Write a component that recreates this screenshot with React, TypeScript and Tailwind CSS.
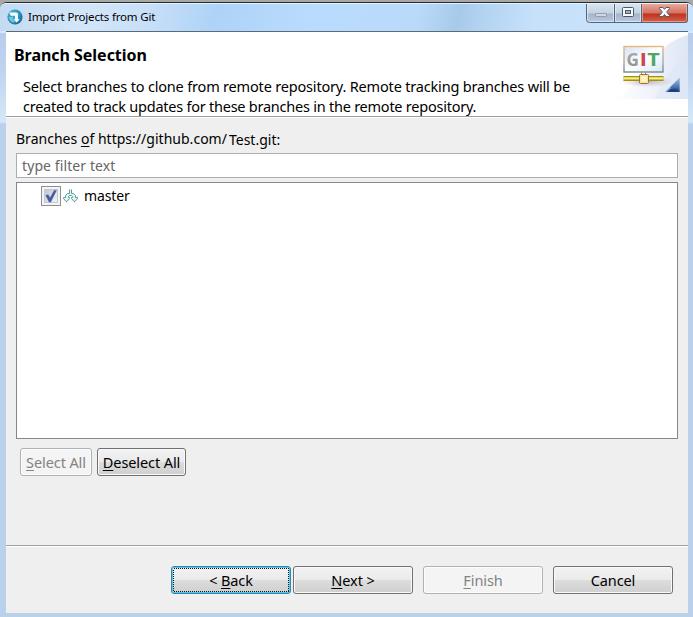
import type { ReactNode } from "react";

function Button({ children, className = "" }: { children: ReactNode; className?: string }) {
  return (
    <button
      className={`flex h-7 items-center justify-center whitespace-nowrap rounded-[3px] border pb-px text-[14.5px] leading-5 tracking-[-0.1px] ${className}`}
    >
      {children}
    </button>
  );
}

const normal =
  "border-[#707070] bg-[linear-gradient(#f2f2f2_0%,#ebebeb_48%,#dddddd_50%,#cfcfcf_100%)] shadow-[inset_0_0_0_1px_#fafafa] text-black";
const disabled = "border-[#adb2b5] bg-[#f4f4f4] shadow-[inset_0_0_0_1px_#fcfcfc] text-[#838383]";

function U({ children }: { children: ReactNode }) {
  return <span className="underline decoration-1 underline-offset-2">{children}</span>;
}

function AppIcon() {
  return (
    <svg width="16" height="16" viewBox="0 0 16 16" className="shrink-0">
      <defs>
        <radialGradient id="orb" cx="35%" cy="30%" r="75%">
          <stop offset="0" stopColor="#55b5d2" />
          <stop offset=".6" stopColor="#2a93bb" />
          <stop offset="1" stopColor="#126a99" />
        </radialGradient>
      </defs>
      <circle cx="8" cy="8" r="7.6" fill="url(#orb)" />
      <path d="M2.5 3.4H9Q11 3.4 11 5.6V10.2H12.8L9.6 13.4L6.2 10.2H8V6.8H5Q3 6.8 2.5 3.4Z" fill="#f4fcff" />
      <path d="M1.6 8H6V10.5L8 13.4H5Q2 11.5 1.6 8Z" fill="#6fc6dc" />
    </svg>
  );
}

function WindowControls() {
  return (
    <svg width="104" height="20" viewBox="0 0 104 20" className="shrink-0">
      <defs>
        <linearGradient id="ctl" x1="0" y1="0" x2="0" y2="1">
          <stop offset="0" stopColor="#d9e4f0" />
          <stop offset=".45" stopColor="#c3d2e2" />
          <stop offset=".5" stopColor="#a2b5ca" />
          <stop offset="1" stopColor="#bdd0e3" />
        </linearGradient>
        <linearGradient id="close" x1="0" y1="0" x2="0" y2="1">
          <stop offset="0" stopColor="#e8a99c" />
          <stop offset=".45" stopColor="#d5705f" />
          <stop offset=".5" stopColor="#bd3321" />
          <stop offset="1" stopColor="#d96b50" />
        </linearGradient>
        <clipPath id="ctlClip">
          <path d="M1 0H102V16Q102 19 99 19H4Q1 19 1 16Z" />
        </clipPath>
      </defs>
      <g clipPath="url(#ctlClip)">
        <rect width="56" height="20" fill="url(#ctl)" />
        <rect x="56" width="48" height="20" fill="url(#close)" />
      </g>
      <path d="M1.5 0V15.5Q1.5 17.5 3.5 17.5H27.5V0M29.5 0V17.5H54.5V0" fill="none" stroke="#e3edf7" strokeOpacity=".75" />
      <path d="M56.5 0V17.5H98.5Q100.5 17.5 100.5 15.5V0" fill="none" stroke="#f0b4a3" strokeOpacity=".7" />
      <path d="M.5 0V15.5Q.5 18.5 3.5 18.5H98.5Q101.5 18.5 101.5 15.5V0M28.5 0V18M55.5 0V18" fill="none" stroke="#536579" />
      <rect x="9.5" y="9.5" width="11" height="3" rx=".5" fill="#d0d7df" stroke="#929fad" />
      <rect x="36.5" y="3.5" width="11" height="9" rx="1" fill="#f7f7f8" stroke="#4d5568" />
      <rect x="39.5" y="6.5" width="5" height="3" fill="#9fb2ca" stroke="#4d5568" />
      <path d="M73.5 3.5H77L78.5 5.3L80 3.5H83.5V4.5L80.7 8L83.5 11.5V12.5H80L78.5 10.5L77 12.5H73.5V11.5L76.3 8L73.5 4.5Z" fill="#f7f7f8" stroke="#555b6b" />
    </svg>
  );
}

function GitBanner() {
  return (
    <svg width="75" height="67" viewBox="0 0 75 67" className="shrink-0">
      <defs>
        <linearGradient id="swoosh" x1="0" y1="0" x2="1" y2="0">
          <stop offset="0" stopColor="#ffffff" />
          <stop offset=".5" stopColor="#f0f3fb" />
          <stop offset="1" stopColor="#dee6f5" />
        </linearGradient>
        <linearGradient id="screen" x1="0" y1="0" x2="1" y2="1">
          <stop offset="0" stopColor="#d3e2f5" />
          <stop offset=".5" stopColor="#ffffff" />
          <stop offset="1" stopColor="#d7e6f8" />
        </linearGradient>
        <linearGradient id="frame" x1="0" y1="0" x2="0" y2="1">
          <stop offset="0" stopColor="#e5b878" />
          <stop offset=".6" stopColor="#a9abb0" />
          <stop offset="1" stopColor="#74888d" />
        </linearGradient>
        <linearGradient id="letter" x1="0" y1="0" x2="0" y2="1">
          <stop offset="0" stopColor="#b2b2b2" />
          <stop offset="1" stopColor="#8a8a8a" />
        </linearGradient>
        <linearGradient id="corner" x1="0" y1="0" x2="0" y2="1">
          <stop offset="0" stopColor="#a9c4e0" />
          <stop offset=".5" stopColor="#5f8abb" />
          <stop offset="1" stopColor="#1b4180" />
        </linearGradient>
        <radialGradient id="shade">
          <stop offset="0" stopColor="#806b90" stopOpacity=".5" />
          <stop offset="1" stopColor="#b9a9c4" stopOpacity="0" />
        </radialGradient>
      </defs>
      <path d="M75 3Q55 8 42 25Q26 52 2 67H75Z" fill="url(#swoosh)" />
      <path d="M75 25Q55 34 42 67H75Z" fill="#dce6f6" opacity=".45" />
      <ellipse cx="34" cy="49.5" rx="28" ry="6" fill="url(#shade)" />
      <rect x="11" y="14.5" width="39" height="25.5" fill="url(#screen)" stroke="url(#frame)" strokeWidth="1.4" />
      <g fontFamily="Open Sans, Noto Sans, sans-serif" fontSize="17.5" fontWeight="700">
        <text x="13.4" y="34.2" fill="url(#letter)" textLength="12.5" lengthAdjust="spacingAndGlyphs">G</text>
        <text x="27.3" y="34.2" fill="#ce4650" fontWeight="800">I</text>
        <text x="34.2" y="34.2" fill="#4fa85e" textLength="12.5" lengthAdjust="spacingAndGlyphs">T</text>
      </g>
      <path d="M10.5 44H50.5V49H10.5Z" fill="#a69200" />
      <path d="M10.5 45.3H50.5V47.5H10.5Z" fill="#f4ed91" />
      <path d="M28.5 40.5V43M32.5 40.5V43" stroke="#a28b4a" />
      <rect x="26.5" y="42.5" width="9" height="9" rx="1" fill="#f8e69e" stroke="#94743b" />
      <rect x="28.5" y="44.5" width="5" height="5" fill="#fff5c8" />
      <path d="M66.7 45.5V60H52.2Z" fill="url(#corner)" />
      <path d="M52.2 60L57.5 54.7V56.5L62 57.2L66.7 60Z" fill="#c4d8ec" opacity=".6" />
      <path d="M57.5 56.7H63L66.7 60H54Z" fill="#1b4180" />
    </svg>
  );
}

function CheckBox() {
  return (
    <svg width="20" height="20" viewBox="0 0 20 20" className="shrink-0">
      <rect x=".5" y=".5" width="19" height="19" fill="#f4f4f4" stroke="#8e8f8f" />
      <defs>
        <linearGradient id="box" x1="0" y1="0" x2="1" y2="1">
          <stop offset="0" stopColor="#bfc5cf" />
          <stop offset="1" stopColor="#f4f5f7" />
        </linearGradient>
      </defs>
      <rect x="3.5" y="3.5" width="13" height="13" fill="url(#box)" stroke="#c3c9d2" />
      <path d="M4.8 9.3L7.2 8.7L9 12L13.2 4.4H15.4L9.7 16H8.1Z" fill="#4659a1" stroke="#3d509a" strokeWidth=".4" />
    </svg>
  );
}

function BranchIcon() {
  return (
    <svg width="16" height="16" viewBox="0 0 16 16" className="shrink-0">
      <path
        d="M6.5 1.5V5.5H4.5L2.5 7.5V9.5H.5V10.5L3 13.5H4L6.5 10.5V9.5H5.5V8.5L6.5 7.5H8.5L9.5 8.5V9.5H8.5V10.5L11 13.5H12L14.5 10.5V9.5H12.5V7.5L10.5 5.5H8.5V1.5"
        fill="#dff3f0"
        stroke="#5a9c9e"
        strokeWidth="1"
      />
    </svg>
  );
}

export default function App() {
  return (
    <div className="h-[617px] w-[693px] overflow-hidden bg-[#a8a8a4] pt-[2px] font-['Noto_Sans','Open_Sans',sans-serif] text-[14px] text-black">
      <div className="flex h-[615px] flex-col rounded-t-[7px] border-t border-[#222b34] bg-[linear-gradient(#d5e8fb_0px,#d5e8fb_30px,#b9cdea_30px,#bdd3ee_65px,#d5e8f9_119px,#b9d1ea_121px,#b9d1ea_100%)]">
        <div className="flex h-7 shrink-0 items-start justify-between rounded-t-[6px] border-t border-[#e7f3ff] bg-[linear-gradient(100deg,#c3daf1_0%,#d3e6f9_12%,#c7dff7_22%,#aed3f7_31%,#b9dbfd_45%,#badafa_60%,#a8cae9_66%,#b4d4f2_70%,#c7e1fa_77%,#c9e3fc_100%)] pl-[7px] pr-[3px]">
          <div className="flex h-6 items-center gap-[5px] pt-px">
            <AppIcon />
            <span className="whitespace-nowrap text-[11.5px] leading-5 tracking-[-0.17px]">Import Projects from Git</span>
          </div>
          <WindowControls />
        </div>
        <div className="mb-1 ml-[6px] mr-[5px] flex min-h-0 flex-1 flex-col border-t border-[#596a7a] bg-[#efefef]">
          <header className="flex h-[85px] shrink-0 justify-between border-b border-[#a0a0a0] bg-white">
            <div className="pl-[8px] pt-[12px]">
              <h1 className="whitespace-nowrap text-[16px] font-bold leading-[23px] tracking-[-0.03px]">Branch Selection</h1>
              <p className="ml-[9px] mt-[9px] whitespace-nowrap text-[14.5px] leading-5">
                <span className="tracking-[-0.18px]">
                  Select branches to clone from remote repository. Remote tracking branches will be
                </span>
                <br />
                <span className="tracking-[-0.24px]">
                  created to track updates for these branches in the remote repository.
                </span>
              </p>
            </div>
            <GitBanner />
          </header>
          <main className="flex-1 border-t border-white px-[10px] pt-[11px]">
            <div className="flex h-[24px] gap-[2px] whitespace-nowrap leading-[20px]">
              <span className="tracking-[0.02px]">
                Branches <U>o</U>f https://github.com/
              </span>
              <span className="pt-px">Test.git:</span>
            </div>
            <div className="flex h-[25px] items-center border border-[#abadb3] bg-white pl-[5px] tracking-[0.1px] text-[#666]">
              type filter text
            </div>
            <div className="mt-1 h-[257px] border border-[#828790] bg-white pl-6 pt-[3px]">
              <div className="flex h-5 items-center">
                <CheckBox />
                <span className="ml-[2px]">
                  <BranchIcon />
                </span>
                <span className="ml-[5px] leading-5 tracking-[-0.1px]">master</span>
              </div>
            </div>
            <div className="flex gap-[5px] pl-1 pt-[9px]">
              <Button className={`w-[72px] ${disabled}`}>
                <span>
                  <U>S</U>elect All
                </span>
              </Button>
              <Button className={`w-[89px] ${normal}`}>
                <span>
                  <U>D</U>eselect All
                </span>
              </Button>
            </div>
          </main>
          <footer className="flex h-[68px] shrink-0 border-t border-[#a0a0a0]">
            <div className="flex flex-1 justify-end border-t border-white pr-[15px] pt-[19px]">
              <Button className="relative w-[120px] border-[#3c7fb1] bg-[linear-gradient(#f2f2f2_0%,#ebebeb_48%,#dddddd_50%,#cfcfcf_100%)] shadow-[inset_0_0_0_1px_#46cdf5]">
                <svg className="absolute inset-0" width="118" height="26">
                  <rect x="1.5" y="1.5" width="115" height="23" fill="none" stroke="#111" strokeDasharray="1 1" shapeRendering="crispEdges" />
                </svg>
                <span>
                  &lt; <U>B</U>ack
                </span>
              </Button>
              <Button className={`ml-[2px] w-[120px] ${normal}`}>
                <span>
                  <U>N</U>ext &gt;
                </span>
              </Button>
              <Button className={`ml-[10px] w-[120px] ${disabled}`}>
                <span>
                  <U>F</U>inish
                </span>
              </Button>
              <Button className={`ml-[10px] w-[120px] ${normal}`}>Cancel</Button>
            </div>
          </footer>
        </div>
      </div>
    </div>
  );
}
